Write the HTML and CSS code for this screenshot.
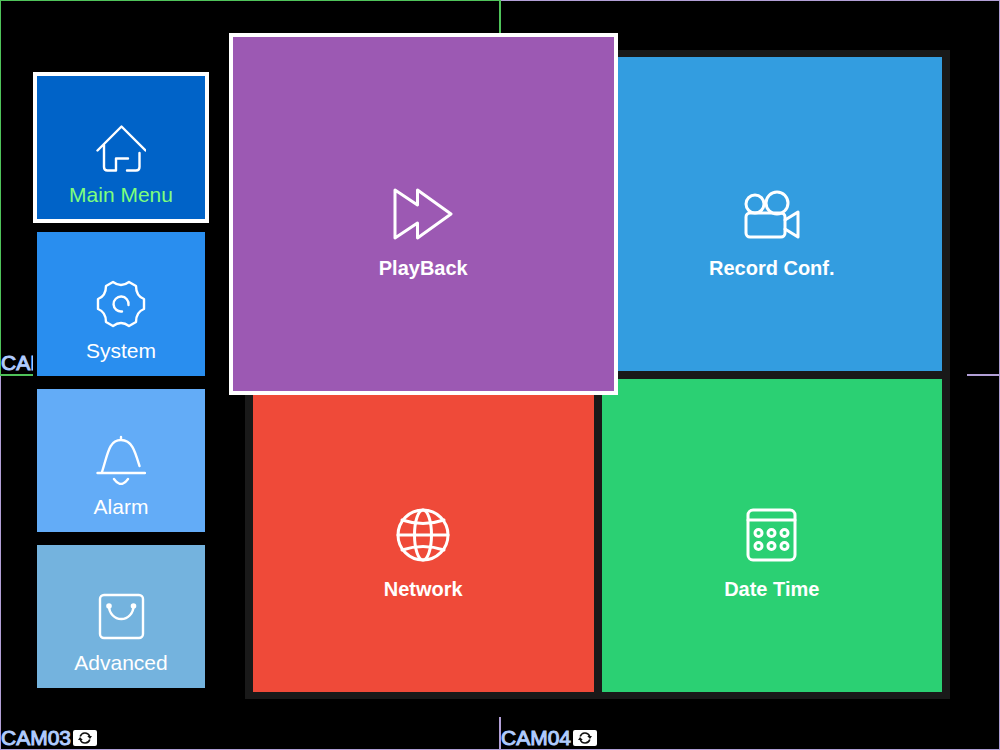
FILE: index.html
```html
<!DOCTYPE html>
<html lang="en">
<head>
<meta charset="utf-8">
<title>Main Menu</title>
<meta name="viewport" content="width=device-width, initial-scale=1">
<link rel="stylesheet" href="styles.css">
</head>

<body>

<div class="cameras">
  <div class="camera camera--active">
    <p class="camera__name">CAM01</p>
  </div>
  <div class="camera camera--top"></div>
  <div class="camera">
    <p class="camera__name">CAM03</p>
    <svg class="camera__sync" viewBox="0 0 24 16" aria-hidden="true">
      <path d="M7.2 6.5A5 5 0 0 1 16.6 6M16.8 9.5A5 5 0 0 1 7.4 10" />
      <path class="camera__arrow" d="M14.2 6H19L17 9ZM9.800 10H5L7 7Z" />
    </svg>
  </div>
  <div class="camera camera--last">
    <p class="camera__name">CAM04</p>
    <svg class="camera__sync" viewBox="0 0 24 16" aria-hidden="true">
      <path d="M7.2 6.5A5 5 0 0 1 16.6 6M16.8 9.5A5 5 0 0 1 7.4 10" />
      <path class="camera__arrow" d="M14.2 6H19L17 9ZM9.800 10H5L7 7Z" />
    </svg>
  </div>
</div>

<main class="menu">
  <nav class="sidebar">
    <button type="button" class="item item--main item--current" aria-current="page">
      <svg class="item__icon" viewBox="0 0 50 50" aria-hidden="true">
        <path d="M1.5 27.5L25.5 3.5L49.5 27.5M8 22V44Q8 47.5 11.5 47.5H20V35.5H32M43.5 30V44Q43.5 47.5 40 47.5H31" />
      </svg>
      <span class="item__label">Main Menu</span>
    </button>
    <button type="button" class="item item--system">
      <svg class="item__icon" viewBox="0 0 50 50" aria-hidden="true">
        <path d="M17 3Q25 9 33 3L40 7Q40 17 48 20V30Q40 33 40 43L33 47Q25 41 17 47L10 43Q10 33 2 30V20Q10 17 10 7Z" />
        <path d="M26 32.5A7.5 7.5 0 1 1 32.5 26" />
      </svg>
      <span class="item__label">System</span>
    </button>
    <button type="button" class="item item--alarm">
      <svg class="item__icon" viewBox="0 0 50 50" aria-hidden="true">
        <path d="M25 2V5M6 37C12 18 13 5 25 5C36 5 39 16 43.5 31M1.5 38H49M18 44Q25 54 32 44" />
      </svg>
      <span class="item__label">Alarm</span>
    </button>
    <button type="button" class="item item--advanced">
      <svg class="item__icon" viewBox="0 0 50 50" aria-hidden="true">
        <rect x="4" y="4" width="43" height="43" rx="4" />
        <path d="M13 15A12.2 13 0 0 0 37.5 15" />
        <circle class="dot" cx="13" cy="15" r="1.6" />
        <circle class="dot" cx="37.5" cy="15" r="1.6" />
      </svg>
      <span class="item__label">Advanced</span>
    </button>
  </nav>

  <section class="tiles">
    <button type="button" class="tile tile--playback tile--focus">
      <svg class="tile__icon" viewBox="0 0 60 60" aria-hidden="true">
        <path d="M2 6L24.5 21V6L58 30L24.5 54V39L2 54Z" />
      </svg>
      <span class="tile__label">PlayBack</span>
    </button>
    <button type="button" class="tile tile--record">
      <svg class="tile__icon" viewBox="0 0 60 60" aria-hidden="true">
        <circle cx="13" cy="20" r="9" />
        <circle cx="35" cy="19" r="11" />
        <rect x="4" y="29" width="39" height="24" rx="4" />
        <path d="M43 36L56 28V53L43 45" />
      </svg>
      <span class="tile__label">Record Conf.</span>
    </button>
    <button type="button" class="tile tile--network">
      <svg class="tile__icon" viewBox="0 0 60 60" aria-hidden="true">
        <circle cx="30" cy="30" r="25" />
        <ellipse cx="30" cy="30" rx="8.5" ry="25" />
        <path d="M5 30H55M9 15Q30 22 51 15M9 45Q30 38 51 45" />
      </svg>
      <span class="tile__label">Network</span>
    </button>
    <button type="button" class="tile tile--date">
      <svg class="tile__icon" viewBox="0 0 60 60" aria-hidden="true">
        <rect x="6" y="5" width="47" height="50" rx="5" />
        <path d="M6 15H53" />
        <circle cx="16.5" cy="28" r="3.5" />
        <circle cx="29.5" cy="28" r="3.5" />
        <circle cx="42.5" cy="28" r="3.5" />
        <circle cx="16.5" cy="41" r="3.5" />
        <circle cx="29.5" cy="41" r="3.5" />
        <circle cx="42.5" cy="41" r="3.5" />
      </svg>
      <span class="tile__label">Date Time</span>
    </button>
  </section>
</main>

</body>

</html>
```
FILE: styles.css
```css
/* reset */
body,p,button{margin:0;padding:0;}
button{border:0;border-radius:0;font:inherit;color:inherit;cursor:pointer;}

/* page */
body{position:relative;min-block-size:100vh;display:grid;background-color:#000;font-family:"Liberation Sans",Arial,sans-serif;font-size:20px;line-height:24px;}

/* camera grid */
.cameras{
  --active: #4fc35a;
  --idle: #b29fd6;

  display:grid;
  grid-template-columns:1fr 1fr;
  grid-template-rows:1fr 1fr;
}
.camera{display:flex;align-items:flex-end;gap:2px;box-sizing:border-box;border:1px solid var(--idle);border-block-start:0;}
.camera--active{z-index:1;margin:0 -1px -1px 0;border:1px solid var(--active);border-width:1px 2px 2px 1px;}
.camera--top{margin-block-end:-1px;border-width:1px 1px 2px 0;border-block-start:1px solid var(--idle);}
.camera--last{margin-inline-start:-1px;border-inline-start-width:2px;}
.camera__name{font-size:21px;line-height:22px;color:#b0ccff;-webkit-text-stroke:1px #b0ccff;}
.camera__sync{inline-size:24px;block-size:16px;margin-block-end:3px;border-radius:2px;background-color:#fff;fill:none;stroke:#111;stroke-width:1.6;}
.camera__arrow{fill:#111;stroke:none;}

/* menu */
.menu{position:absolute;inset:33px;z-index:2;display:grid;grid-template-columns:168px 1fr;gap:40px;box-sizing:border-box;padding:17px 17px 18px 4px;background-color:#000;}

.sidebar{display:grid;grid-auto-rows:1fr;gap:13px;padding-block:26px 11px;}
.item,.tile{display:grid;grid-template-rows:1fr auto 1fr;justify-items:center;}
.item__icon,.tile__icon{grid-row:2;fill:none;stroke:#fff;stroke-linecap:round;stroke-linejoin:round;}
.item__label,.tile__label{grid-row:3;align-self:start;}

.item{color:#fff;font-size:21px;}
.item__icon{inline-size:50px;block-size:50px;stroke-width:2.4;}
.item__label{margin-block-start:10px;}
.item--main{background-color:#0063c8;}
.item--system{background-color:#298eef;}
.item--alarm{background-color:#63acf7;}
.item--advanced{background-color:#74b3de;}
.item--current{color:#7dff7d;box-shadow:0 0 0 4px #fff;}
.dot{fill:#fff;}

.tiles{display:grid;grid-template-columns:1fr 1fr;grid-template-rows:1fr 1fr;gap:8px;padding:7px 8px;background-color:#191919;}
.tile{color:#fff;font-weight:700;}
.tile__icon{inline-size:60px;block-size:60px;stroke-width:3;}
.tile__label{margin-block-start:12px;}
.tile--playback{background-color:#9c59b3;}
.tile--record{background-color:#339de0;}
.tile--network{background-color:#ef4a39;}
.tile--date{background-color:#2bd073;}
.tile--focus{z-index:1;margin:-24px;border:4px solid #fff;}

.item:focus-visible,.tile:focus-visible{outline:4px solid #fff;}
```
